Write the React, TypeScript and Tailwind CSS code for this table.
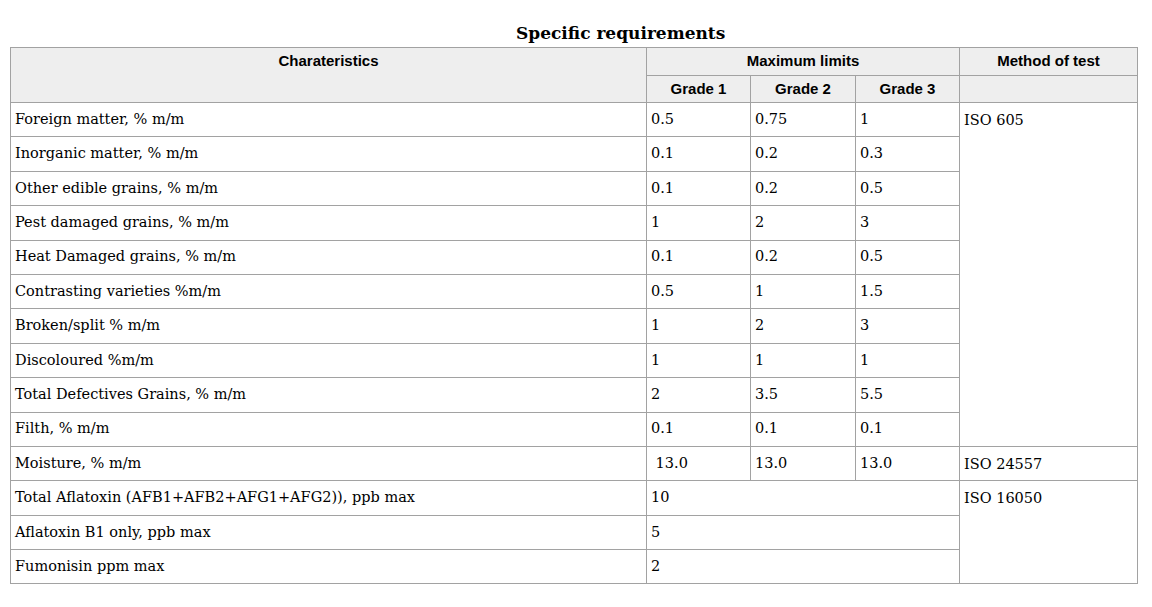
const rows: { name: string; g: string[]; method?: { text: string; span: number } }[] = [
  { name: "Foreign matter, % m/m", g: ["0.5", "0.75", "1"], method: { text: "ISO 605", span: 10 } },
  { name: "Inorganic matter, % m/m", g: ["0.1", "0.2", "0.3"] },
  { name: "Other edible grains, % m/m", g: ["0.1", "0.2", "0.5"] },
  { name: "Pest damaged grains, % m/m", g: ["1", "2", "3"] },
  { name: "Heat Damaged grains, % m/m", g: ["0.1", "0.2", "0.5"] },
  { name: "Contrasting varieties %m/m", g: ["0.5", "1", "1.5"] },
  { name: "Broken/split % m/m", g: ["1", "2", "3"] },
  { name: "Discoloured %m/m", g: ["1", "1", "1"] },
  { name: "Total Defectives Grains, % m/m", g: ["2", "3.5", "5.5"] },
  { name: "Filth, % m/m", g: ["0.1", "0.1", "0.1"] },
  { name: "Moisture, % m/m", g: ["\u00a013.0", "13.0", "13.0"], method: { text: "ISO 24557", span: 1 } },
  { name: "Total Aflatoxin (AFB1+AFB2+AFG1+AFG2)), ppb max", g: ["10"], method: { text: "ISO 16050", span: 3 } },
  { name: "Aflatoxin B1 only, ppb max", g: ["5"] },
  { name: "Fumonisin ppm max", g: ["2"] },
];

const serif = "font-['Georgia','DejaVu_Serif',serif]";
const th = "border border-[#a2a2a2] bg-[#eeeeee] font-bold text-[15px] text-black font-['Liberation_Sans',Arial,sans-serif]";
const td = `border border-[#a2a2a2] h-[34.4px] px-[4px] align-middle text-[14.5px] text-black ${serif}`;

export default function App() {
  return (
    <div className="min-h-[607px] w-[1152px] bg-white pt-[21px]">
      <h2 className={`pl-[516px] text-[17px] font-bold leading-[24px] text-black ${serif}`}>Specific requirements</h2>
      <table className="ml-[10px] mt-[2px] w-[1127px] table-fixed border-collapse">
        <colgroup>
          <col className="w-[636px]" />
          <col className="w-[104px]" />
          <col className="w-[105px]" />
          <col className="w-[104px]" />
          <col className="w-[178px]" />
        </colgroup>
        <thead>
          <tr>
            <th rowSpan={2} className={`${th} h-[28px] pt-[2px] align-top`}>Charateristics</th>
            <th colSpan={3} className={`${th} h-[28px]`}>Maximum limits</th>
            <th className={`${th} h-[28px]`}>Method of test</th>
          </tr>
          <tr>
            <th className={`${th} h-[27px]`}>Grade 1</th>
            <th className={`${th} h-[27px]`}>Grade 2</th>
            <th className={`${th} h-[27px]`}>Grade 3</th>
            <th className={`${th} h-[27px]`}></th>
          </tr>
        </thead>
        <tbody>
          {rows.map((r) => (
            <tr key={r.name}>
              <td className={td}>{r.name}</td>
              {r.g.length === 1 ? (
                <td colSpan={3} className={td}>{r.g[0]}</td>
              ) : (
                r.g.map((v, i) => (
                  <td key={i} className={td}>{v}</td>
                ))
              )}
              {r.method && (
                <td rowSpan={r.method.span} className={`${td} align-top pt-[7px]`}>{r.method.text}</td>
              )}
            </tr>
          ))}
        </tbody>
      </table>
    </div>
  );
}
